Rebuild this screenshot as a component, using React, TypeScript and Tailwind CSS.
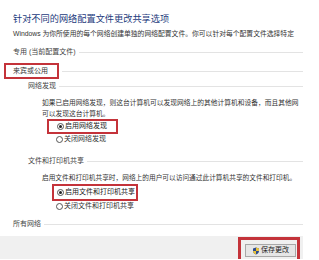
const cjk = "font-['Liberation_Sans','Noto_Sans_CJK_SC',sans-serif]";

const Radio = ({ checked }: { checked?: boolean }) => (
  <span className="w-[7px] h-[7px] rounded-full border border-[#555] bg-white flex items-center justify-center shrink-0">
    {checked && <span className="w-[3px] h-[3px] rounded-full bg-[#222]" />}
  </span>
);

const Heading = ({ label, indent }: { label: string; indent: string }) => (
  <div className={`h-[12px] flex items-center gap-[3px] ${indent}`}>
    <span className="text-[7px] text-[#444] whitespace-nowrap">{label}</span>
    <span className="flex-1 h-px bg-[#e3e3e3]" />
  </div>
);

const Shield = () => (
  <svg viewBox="0 0 16 16" className="w-[8px] h-[8px]">
    <path d="M8 1 L14 3 V8 C14 11.5 11 14 8 15 C5 14 2 11.5 2 8 V3 Z" fill="#2c4a8c" />
    <path d="M8 1 V8 H14 V3 Z" fill="#e9c23a" />
    <path d="M2 8 H8 V15 C5 14 2 11.5 2 8 Z" fill="#e9c23a" />
  </svg>
);

export default function App() {
  return (
    <div className={`w-[319px] h-[260px] bg-white overflow-hidden ${cjk}`}>
      <div className="w-[303px] flex flex-col">
        {/* title */}
        <div className="mt-[12px] h-[16px] pl-[13px] flex items-center text-[9.2px] text-[#1d3b7d] whitespace-nowrap">
          针对不同的网络配置文件更改共享选项
        </div>
        <div className="h-[12px] pl-[13px] flex items-center text-[6.8px] text-[#333] whitespace-nowrap overflow-hidden">
          Windows 为你所使用的每个网络创建单独的网络配置文件。你可以针对每个配置文件选择特定
        </div>

        <div className="mt-[6px]">
          <Heading label="专用 (当前配置文件)" indent="pl-[13px]" />
        </div>

        {/* 来宾或公用 */}
        <div className="mt-[5px] h-[16px] pl-[4px] flex items-center gap-[3px]">
          <span className="w-[55px] h-[16px] border-2 border-[#c4333a] pl-[7px] flex items-center text-[7px] text-[#333] whitespace-nowrap">
            来宾或公用
          </span>
          <span className="flex-1 h-px bg-[#e3e3e3]" />
        </div>

        <div className="mt-[1px]">
          <Heading label="网络发现" indent="pl-[28px]" />
        </div>

        <div className="mt-[5px] pl-[42px] text-[6.75px] leading-[11px] text-[#333] whitespace-nowrap">
          <div>如果已启用网络发现，则这台计算机可以发现网络上的其他计算机和设备，而且其他网</div>
          <div>可以发现这台计算机。</div>
        </div>

        <div className="h-[15px] pl-[47px] flex items-center">
          <span className="w-[71px] h-[15px] border-2 border-[#c4333a] pl-[8px] flex items-center gap-[1px] text-[7px] text-[#222] whitespace-nowrap">
            <Radio checked />
            启用网络发现
          </span>
        </div>
        <div className="h-[11px] pl-[56px] flex items-center gap-[1px] text-[7px] text-[#333] whitespace-nowrap">
          <Radio />
          关闭网络发现
        </div>

        <div className="mt-[10px]">
          <Heading label="文件和打印机共享" indent="pl-[28px]" />
        </div>

        <div className="mt-[5px] h-[12px] pl-[42px] flex items-center text-[6.7px] text-[#333] whitespace-nowrap">
          启用文件和打印机共享时，网络上的用户可以访问通过此计算机共享的文件和打印机。
        </div>

        <div className="h-[17px] pl-[52px] flex items-center">
          <span className="w-[86px] h-[17px] border-2 border-[#c4333a] pl-[3px] flex items-center gap-[1px] text-[7px] text-[#222] whitespace-nowrap">
            <Radio checked />
            启用文件和打印机共享
          </span>
        </div>
        <div className="h-[10px] pl-[56px] flex items-center gap-[1px] text-[7px] text-[#333] whitespace-nowrap">
          <Radio />
          关闭文件和打印机共享
        </div>

        <div className="mt-[7px]">
          <Heading label="所有网络" indent="pl-[13px]" />
        </div>

        {/* bottom bar */}
        <div className="mt-[6px] h-[23px] bg-[#f0f0f0] flex justify-end pr-[3px] pt-[1px]">
          <div className="w-[62px] h-[22px] border-t-[3px] border-l-[3px] border-r-[3px] border-[#c4333a] pl-[4px] pt-[4px]">
            <div className="w-[51px] h-[13px] bg-[#e6e6e6] border border-[#a8a8a8] flex items-center justify-center gap-[1px] text-[7px] text-[#222] whitespace-nowrap">
              <Shield />
              保存更改
            </div>
          </div>
        </div>
      </div>
    </div>
  );
}
